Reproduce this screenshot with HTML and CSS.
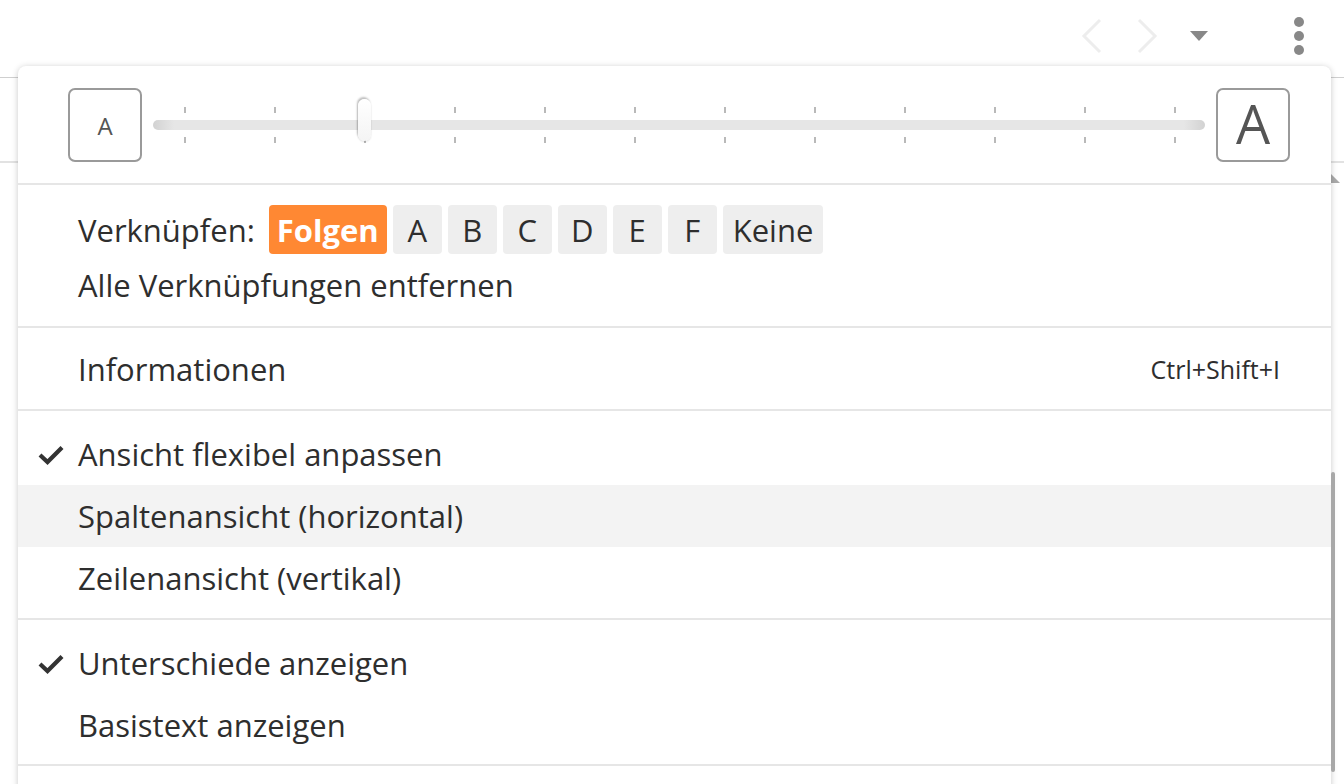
FILE: index.html
```html
<!DOCTYPE html>
<html lang="de">
<head>
<meta charset="utf-8">
<title>Menü</title>
<link rel="stylesheet" href="styles.css">
</head>
<body>
<div class="page">
  <header class="topbar">
    <div class="nav">
      <svg class="chev" width="24" height="36" viewBox="0 0 24 36"><path d="M20 2 L4 18 L20 34" fill="none" stroke="#ededed" stroke-width="3"/></svg>
      <svg class="chev" width="24" height="36" viewBox="0 0 24 36"><path d="M4 2 L20 18 L4 34" fill="none" stroke="#ededed" stroke-width="3"/></svg>
      <svg class="caret" width="18" height="10" viewBox="0 0 18 10"><path d="M0 0 H18 L9 10 Z" fill="#888"/></svg>
      <div class="kebab"><span></span><span></span><span></span></div>
    </div>
  </header>
  <div class="toolbar"><span class="corner"></span></div>
</div>

<div class="menu">
  <section class="sizer">
    <div class="abox small">A</div>
    <div class="track">
      <span class="tick"></span><span class="tick"></span><span class="tick on"><span class="thumb"></span></span><span class="tick"></span>
      <span class="tick"></span><span class="tick"></span><span class="tick"></span><span class="tick"></span>
      <span class="tick"></span><span class="tick"></span><span class="tick"></span><span class="tick"></span>
    </div>
    <div class="abox big">A</div>
  </section>

  <section class="sec link">
    <div class="linkrow">
      <span class="label">Verknüpfen:</span>
      <span class="btn active">Folgen</span>
      <span class="btn">A</span>
      <span class="btn">B</span>
      <span class="btn">C</span>
      <span class="btn">D</span>
      <span class="btn">E</span>
      <span class="btn">F</span>
      <span class="btn">Keine</span>
    </div>
    <div class="item">Alle Verknüpfungen entfernen</div>
  </section>

  <section class="sec info">
    <div class="item"><span>Informationen</span><span class="kbd">Ctrl+Shift+I</span></div>
  </section>

  <section class="sec views">
    <div class="item"><svg class="check" width="26" height="20" viewBox="0 0 26 20"><path d="M2 10 L9.5 17 L24 2.5" fill="none" stroke="#333" stroke-width="4.2"/></svg>Ansicht flexibel anpassen</div>
    <div class="item hover">Spaltenansicht (horizontal)</div>
    <div class="item">Zeilenansicht (vertikal)</div>
  </section>

  <section class="sec diffs">
    <div class="item"><svg class="check" width="26" height="20" viewBox="0 0 26 20"><path d="M2 10 L9.5 17 L24 2.5" fill="none" stroke="#333" stroke-width="4.2"/></svg>Unterschiede anzeigen</div>
    <div class="item">Basistext anzeigen</div>
  </section>

  <section class="sec">
    <div class="item">&nbsp;</div>
  </section>
  <div class="scrollbar"></div>
</div>
</body>
</html>
```

FILE: styles.css
```css
html, body {
  margin: 0;
  padding: 0;
  height: 784px;
  overflow: hidden;
  background: #fff;
  font-family: "Open Sans", "Lato", sans-serif;
  color: #2e2e2e;
}

.page {
  width: 1344px;
}

.topbar {
  height: 78px;
  border-bottom: 1px solid #cfcfcf;
  box-sizing: border-box;
  display: flex;
  justify-content: flex-end;
}

.nav {
  display: flex;
  align-items: center;
  padding-right: 40px;
  height: 72px;
}

.chev {
  margin-right: 31px;
}

.caret {
  margin-right: 86px;
}

.kebab {
  display: flex;
  flex-direction: column;
  gap: 4px;
}

.kebab span {
  width: 10px;
  height: 10px;
  border-radius: 50%;
  background: #888;
}

.toolbar {
  height: 85px;
  border-bottom: 2px solid #e2e2e2;
  box-sizing: border-box;
  position: relative;
}

.corner {
  position: absolute;
  right: 4px;
  top: 96px;
  width: 0;
  height: 0;
  border-left: 9px solid transparent;
  border-bottom: 9px solid #aaa;
  transform: scaleX(-1);
}

.menu {
  position: absolute;
  left: 18px;
  top: 66px;
  width: 1313px;
  height: 760px;
  background: #fff;
  border-radius: 8px;
  box-shadow: 0 1px 6px rgba(0, 0, 0, 0.22);
}

.sizer {
  display: flex;
  align-items: center;
  padding: 22px 41px 21px 50px;
  border-bottom: 2px solid #e6e6e6;
}

.abox {
  width: 74px;
  height: 74px;
  box-sizing: border-box;
  border: 2px solid #9a9a9a;
  border-radius: 7px;
  display: flex;
  align-items: center;
  justify-content: center;
  color: #555;
  font-family: "Open Sans", sans-serif;
  flex: none;
}

.abox.small {
  font-size: 24px;
}

.abox.big {
  font-size: 54px;
  padding-bottom: 4px;
}

.track {
  flex: 1;
  margin: 0 11px;
  height: 10px;
  border-radius: 5px;
  background: linear-gradient(to right, #d2d2d2, #e6e6e6 2%, #e6e6e6 98%, #d2d2d2);
  display: flex;
  justify-content: space-between;
  padding: 0 30px 0 31px;
  box-sizing: border-box;
}

.tick {
  position: relative;
  width: 1px;
  height: 10px;
}

.tick::before,
.tick::after {
  content: "";
  position: absolute;
  left: 0;
  width: 2px;
  height: 6px;
  background: #b9b9b9;
}

.tick::before {
  top: -13px;
}

.tick::after {
  bottom: -13px;
}

.thumb {
  position: absolute;
  left: -6px;
  top: -21px;
  width: 13px;
  height: 42px;
  border-radius: 7px;
  background: linear-gradient(#fff, #f4f4f4);
  box-shadow: -1px -2px 2px rgba(0, 0, 0, 0.25), 0 1px 2px rgba(0, 0, 0, 0.12);
  z-index: 1;
}

.sec {
  border-bottom: 2px solid #e6e6e6;
}

.sec.link {
  padding: 20px 0 10px;
}

.sec.info {
  padding: 10px 0 9px;
}

.sec.views {
  padding: 12px 0 9px;
}

.sec.diffs {
  padding: 12px 0 8px;
}

.linkrow {
  display: flex;
  align-items: center;
  gap: 6px;
  padding-left: 60px;
  height: 49px;
}

.label {
  font-size: 31px;
  margin-right: 8px;
}

.btn {
  height: 49px;
  min-width: 49px;
  box-sizing: border-box;
  padding: 0 10px;
  border-radius: 4px;
  background: #eeeeee;
  font-size: 31px;
  display: flex;
  align-items: center;
  justify-content: center;
}

.btn.active {
  background: #ff8833;
  color: #fff;
  font-weight: 700;
  padding: 0 8px;
}

.item {
  height: 62px;
  display: flex;
  align-items: center;
  padding: 0 51px 0 60px;
  font-size: 31px;
  position: relative;
}

.item.hover {
  background: #f3f3f3;
}

.kbd {
  margin-left: auto;
  font-size: 25px;
}

.check {
  position: absolute;
  left: 20px;
  top: 22px;
}

.scrollbar {
  position: absolute;
  right: -4px;
  top: 406px;
  width: 4px;
  height: 300px;
  border-radius: 2px;
  background: #a8a8a8;
}
```
